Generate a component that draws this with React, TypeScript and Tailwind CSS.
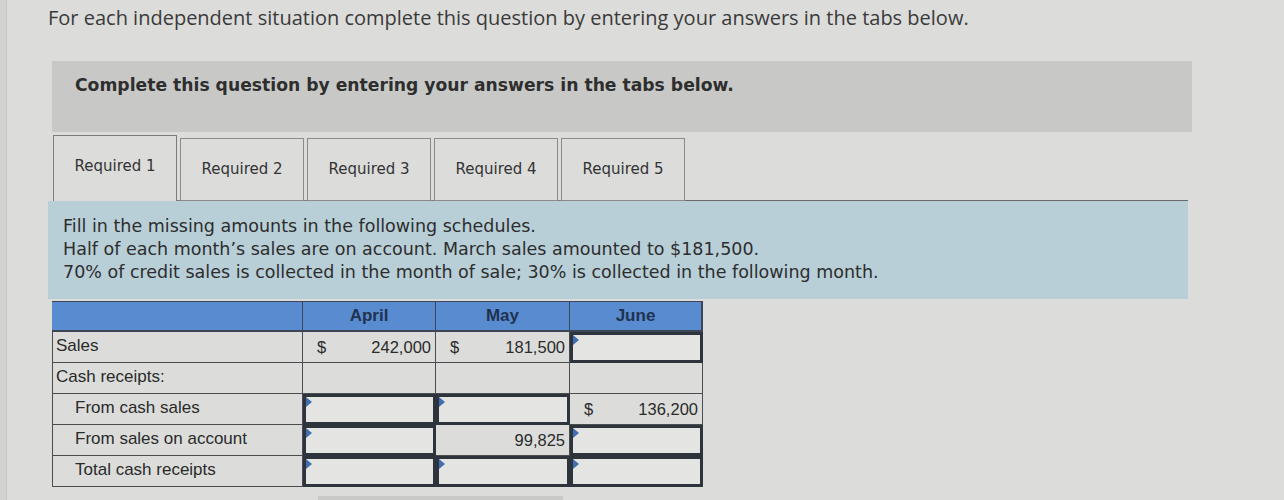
import React from "react";

const Marker = () => (
  <span className="absolute left-0 top-0 w-0 h-0 border-t-[5px] border-b-[5px] border-l-[6px] border-t-transparent border-b-transparent border-l-[#3f6fb0]" />
);

type Cell =
  | { kind: "input" }
  | { kind: "empty" }
  | { kind: "value"; dollar?: boolean; value: string };

const rows: { label: string; indent: boolean; cells: Cell[] }[] = [
  {
    label: "Sales",
    indent: false,
    cells: [
      { kind: "value", dollar: true, value: "242,000" },
      { kind: "value", dollar: true, value: "181,500" },
      { kind: "input" },
    ],
  },
  { label: "Cash receipts:", indent: false, cells: [{ kind: "empty" }, { kind: "empty" }, { kind: "empty" }] },
  {
    label: "From cash sales",
    indent: true,
    cells: [{ kind: "input" }, { kind: "input" }, { kind: "value", dollar: true, value: "136,200" }],
  },
  {
    label: "From sales on account",
    indent: true,
    cells: [{ kind: "input" }, { kind: "value", value: "99,825" }, { kind: "input" }],
  },
  {
    label: "Total cash receipts",
    indent: true,
    cells: [{ kind: "input" }, { kind: "input" }, { kind: "input" }],
  },
];

function ValueCell({ c }: { c: Cell }) {
  if (c.kind === "input") {
    return (
      <div className="relative h-full border-[3px] border-[#2e343b] bg-[#e4e5e3]">
        <Marker />
      </div>
    );
  }
  if (c.kind === "empty") {
    return <div className="h-full border-r border-b border-[#4a4d50] bg-[#dcdddb]" />;
  }
  return (
    <div className="h-full border-r border-b border-[#4a4d50] bg-[#dcdddb] flex items-center justify-between pl-[14px] pr-[4px] text-[16.5px] text-[#2a2a2a]">
      <span>{c.dollar ? "$" : ""}</span>
      <span>{c.value}</span>
    </div>
  );
}

export default function App() {
  const tabs = ["Required 1", "Required 2", "Required 3", "Required 4", "Required 5"];
  return (
    <div className="w-[1284px] h-[500px] overflow-hidden bg-[#dcdddb] relative">
      <div className="absolute left-0 top-0 bottom-0 w-[7px] bg-[#d2d3d1] border-r border-[#c4c5c3]" />
      <div className="pl-[48px] pt-[4px] h-[61px] text-[20px] text-[#3a3a3a] font-['Open_Sans',sans-serif] leading-[28px]">
        For each independent situation complete this question by entering your answers in the tabs below.
      </div>
      <div className="ml-[52px] w-[1140px] h-[71px] bg-[#c8c9c7] pl-[23px] pt-[10px]">
        <span className="font-['DejaVu_Sans',sans-serif] font-bold text-[17.2px] leading-[28px] text-[#2e2e2e]">
          Complete this question by entering your answers in the tabs below.
        </span>
      </div>
      <div className="ml-[48px] mt-[3px] w-[1140px]">
        <div className="flex items-end h-[66px] pl-[5px]">
          {tabs.map((t, i) => (
            <div key={t} className="flex items-end">
              <div
                className={
                  i === 0
                    ? "w-[124px] h-[66px] border-l border-t border-r border-[#7c7d7c] bg-[#dcdddb] flex items-center justify-center pb-[4px] font-['DejaVu_Sans',sans-serif] text-[15px] text-[#333]"
                    : "w-[124px] h-[63px] border border-[#8a8b8a] bg-[#dcdddb] flex items-center justify-center font-['DejaVu_Sans',sans-serif] text-[15px] text-[#333]"
                }
              >
                {t}
              </div>
              {i < tabs.length - 1 && <div className="w-[3px] h-[1px] bg-[#7c7d7c]" />}
            </div>
          ))}
          <div className="flex-1 h-[1px] bg-[#6a6b6a]" />
        </div>
        <div className="h-[98px] bg-[#b8cfd8] pt-[14px] pl-[15px] font-['DejaVu_Sans',sans-serif] text-[17.5px] leading-[23px] text-[#2d2d2d]">
          <div>Fill in the missing amounts in the following schedules.</div>
          <div>Half of each month’s sales are on account. March sales amounted to $181,500.</div>
          <div>70% of credit sales is collected in the month of sale; 30% is collected in the following month.</div>
        </div>
      </div>
      <div className="ml-[52px] mt-[2px] w-[651px] font-['Liberation_Sans',Arial,sans-serif]">
        <div className="grid grid-cols-[251px_133px_134px_133px] h-[31px] bg-[#588bd0] border-t border-b-2 border-[#3c4656] text-[17px] font-bold text-[#1f3350]">
          <div className="border-r border-[#3c4656]" />
          <div className="flex items-center justify-center border-r border-[#3c4656]">April</div>
          <div className="flex items-center justify-center border-r border-[#3c4656]">May</div>
          <div className="flex items-center justify-center border-r-2 border-[#3c4656]">June</div>
        </div>
        {rows.map((r) => (
          <div key={r.label} className="grid grid-cols-[251px_133px_134px_133px] h-[31px]">
            <div
              className={
                "flex items-center pb-[3px] border-l border-b border-r border-[#4a4d50] bg-[#dcdddb] text-[17px] text-[#2a2a2a] " +
                (r.indent ? "pl-[22px]" : "pl-[3px]")
              }
            >
              {r.label}
            </div>
            {r.cells.map((c, i) => (
              <ValueCell key={i} c={c} />
            ))}
          </div>
        ))}
      </div>
      <div className="ml-[318px] mt-[9px] w-[245px] h-[10px] bg-[#c9cac8]" />
    </div>
  );
}
